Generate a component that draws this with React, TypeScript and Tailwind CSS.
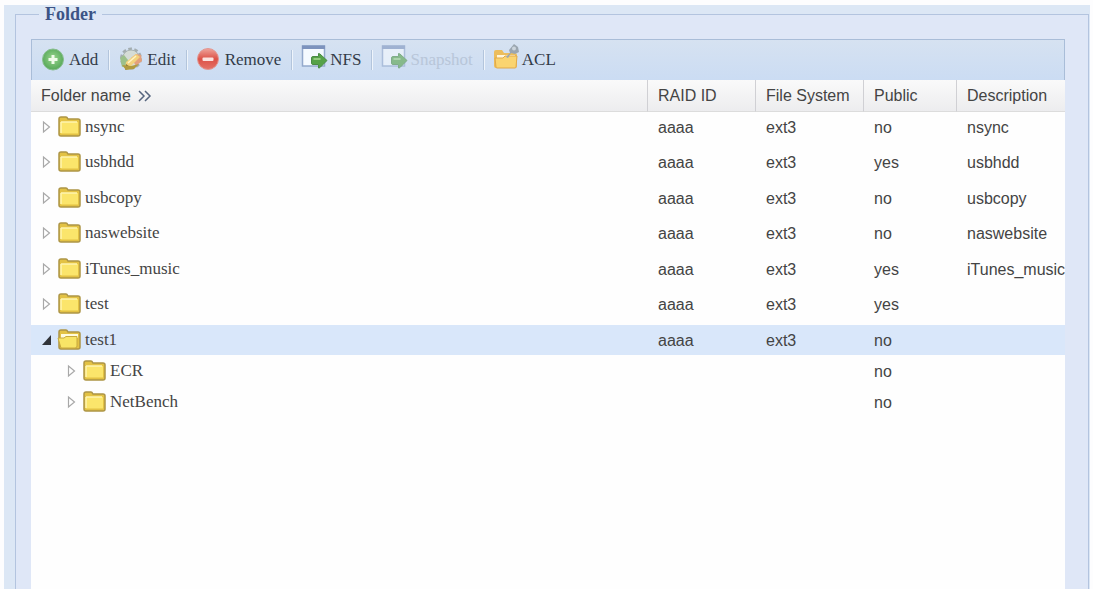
import React, { useState } from 'react';

type Folder = {
  name: string;
  raid?: string;
  fs?: string;
  isPublic: boolean;
  description?: string;
  children?: Folder[];
};

const FOLDERS: Folder[] = [
  { name: 'nsync', raid: 'aaaa', fs: 'ext3', isPublic: false, description: 'nsync' },
  { name: 'usbhdd', raid: 'aaaa', fs: 'ext3', isPublic: true, description: 'usbhdd' },
  { name: 'usbcopy', raid: 'aaaa', fs: 'ext3', isPublic: false, description: 'usbcopy' },
  { name: 'naswebsite', raid: 'aaaa', fs: 'ext3', isPublic: false, description: 'naswebsite' },
  { name: 'iTunes_music', raid: 'aaaa', fs: 'ext3', isPublic: true, description: 'iTunes_music' },
  { name: 'test', raid: 'aaaa', fs: 'ext3', isPublic: true },
  {
    name: 'test1', raid: 'aaaa', fs: 'ext3', isPublic: false,
    children: [
      { name: 'ECR', isPublic: false },
      { name: 'NetBench', isPublic: false },
    ],
  },
];

function AddIcon() {
  return (
    <svg className="w-6 h-6" viewBox="0 0 24 24" aria-hidden="true">
      <defs>
        <radialGradient id="green" cx="0.5" cy="0.45" r="0.6">
          <stop offset="0" stopColor="#9ad68f" />
          <stop offset="1" stopColor="#4fa352" />
        </radialGradient>
      </defs>
      <circle cx="12" cy="11.5" r="10.5" fill="url(#green)" stroke="#86bd8b" strokeWidth="1" />
      <path d="M12 7v9M7.500 11.500h9" stroke="#f0fbe9" strokeWidth="3" />
    </svg>
  );
}

function EditIcon() {
  return (
    <svg className="w-6 h-6 overflow-visible" viewBox="0 0 24 24" aria-hidden="true">
      <circle cx="12" cy="10.5" r="9.5" fill="none" stroke="#a3adb0" strokeWidth="3" strokeDasharray="3.6 2.37" />
      <circle cx="12" cy="10.5" r="8.5" fill="#d5dcd6" stroke="#a9b3b1" strokeWidth="1" />
      <path d="M1 10l4-3 4 5-1 6-5 1z" fill="#9cc08a" />
      <path d="M12 10l5-4 5 1 1 6-6 5z" fill="#e3a07c" />
      <path d="M6 20l1-6L17 6l4 3L11 19z" fill="#f3d27c" />
      <path d="M7 16l4 3-5 3z" fill="#7d6b3a" />
      <path d="M3 17l4 5 8-1 5-5-8 2z" fill="#b09a3e" />
      <path d="M9 15l8-7" stroke="#fff3c6" strokeWidth="1.5" />
    </svg>
  );
}

function RemoveIcon() {
  return (
    <svg className="w-6 h-6" viewBox="0 0 24 24" aria-hidden="true">
      <defs>
        <linearGradient id="red" x1="0" y1="0" x2="0" y2="1">
          <stop offset="0" stopColor="#efa49b" />
          <stop offset="0.5" stopColor="#dc5147" />
          <stop offset="1" stopColor="#e47368" />
        </linearGradient>
      </defs>
      <circle cx="11" cy="11" r="10.5" fill="url(#red)" stroke="#e39791" strokeWidth="1" />
      <rect x="5.500" y="9.500" width="11" height="3.500" rx="1" fill="#fbe3df" />
    </svg>
  );
}

function WindowArrowIcon() {
  return (
    <svg className="w-6 h-6 overflow-visible" viewBox="0 0 24 24" aria-hidden="true">
      <rect x="0.5" y="-2" width="22" height="20" fill="#f5faff" stroke="#93a9cc" strokeWidth="1.5" />
      <rect x="0" y="-2.5" width="23" height="3.500" fill="#7d93bd" />
      <path d="M9.500 10q0-1.500 1.500-1.500h5.500V5.500q1 0 1.500.5l7 6.500-7 7q-.5.500-1.500.5v-3.500H11q-1.500 0-1.500-1.500z" fill="#56a248" stroke="#4b8c45" strokeWidth="1" strokeLinejoin="round" />
      <path d="M11.500 11h7" stroke="#93cc7e" strokeWidth="2" />
    </svg>
  );
}

function AclIcon() {
  return (
    <svg className="w-6 h-6 overflow-visible" viewBox="0 0 24 24" aria-hidden="true">
      <path d="M0 4q0-2 2-2h6l2 3h11q2 0 2 2v11q0 2-2 2H2q-2 0-2-2z" fill="#ecbd5c" />
      <path d="M3 7h18v4H3z" fill="#fff6da" />
      <path d="M1 10h8l2-2h12l-1 11q0 1-1 1H3q-1 0-1-1z" fill="#fad470" stroke="#e0a94a" strokeWidth="1" />
      <path d="M12 9l4-4-1-3 5-6 4 3 1 5-4 2-4-1-3 5z" fill="#9ba6b0" />
      <circle cx="20" cy="0.500" r="2" fill="#ccd5dd" />
    </svg>
  );
}

function FolderIcon({ open }: { open: boolean }) {
  return (
    <svg className="w-6 h-6 shrink-0" viewBox="0 0 24 24" aria-hidden="true">
      <path d="M2 4q0-2 2-2h5q1 0 2 2h10q2 0 2 2v13q0 2-2 2H4q-2 0-2-2z" fill="#e3c244" stroke="#ad9546" strokeWidth="1.500" />
      {open ? (
        <>
          <path d="M4 6h17v4H4z" fill="#fffbdc" />
          <path d="M1 10h6l2-1.500h11v9.500q0 2-2 2H4z" fill="#f8e566" stroke="#c8a93e" strokeWidth="1" strokeLinejoin="round" />
        </>
      ) : (
        <>
          <path d="M4 7h17v11.500H4z" fill="#fbe56b" />
          <path d="M4 7h16M4 7v11" stroke="#fff5b0" strokeWidth="1.500" />
        </>
      )}
    </svg>
  );
}

function Expander({ open }: { open: boolean }) {
  return (
    <svg className="w-3 h-4" viewBox="0 0 12 16" aria-hidden="true">
      {open
        ? <path d="M10 3v10H1z" fill="#30343a" />
        : <path d="M2.500 3v10l6-5z" fill="#fff" stroke="#a8a8a8" strokeWidth="1.200" />}
    </svg>
  );
}

const TOOLS = [
  { label: 'Add', Icon: AddIcon },
  { label: 'Edit', Icon: EditIcon },
  { label: 'Remove', Icon: RemoveIcon },
  { label: 'NFS', Icon: WindowArrowIcon },
  { label: 'Snapshot', Icon: WindowArrowIcon, disabled: true },
  { label: 'ACL', Icon: AclIcon },
];

const TH = 'h-8 pl-2.5 text-left font-normal border-b border-[#dcdcdc] whitespace-nowrap';
const TD = 'pl-[11px] pt-0.5 whitespace-nowrap overflow-hidden';

export default function App() {
  const [selected, setSelected] = useState('test1');
  const [expanded, setExpanded] = useState<string[]>(['test1']);

  const toggle = (name: string) =>
    setExpanded(prev => (prev.includes(name) ? prev.filter(n => n !== name) : [...prev, name]));

  const renderRow = (folder: Folder, child: boolean) => {
    const open = expanded.includes(folder.name) && !!folder.children;
    // open folders sit flush with their children
    const gap = child || open ? '' : 'border-b-[5px] group-even:border-b-[6px] border-[#fefefe]';
    const cell = `${TD} ${gap}`;
    return (
      <tr key={folder.name} onClick={() => setSelected(folder.name)}
        className={`group ${selected === folder.name ? 'bg-[#d9e7fa]' : ''}`}>
        <td className={`${gap} ${child ? 'pl-[35px]' : 'pl-2.5'}`}>
          <div className={`flex items-center font-['Liberation_Serif',serif] text-[17px] ${child ? 'h-[31px]' : 'h-[30px]'}`}>
            <button type="button" aria-label={`Toggle ${folder.name}`} aria-expanded={open} onClick={() => toggle(folder.name)} className="mr-1">
              <Expander open={open} />
            </button>
            <FolderIcon open={open} />
            <span className="pl-1">{folder.name}</span>
          </div>
        </td>
        <td className={cell}>{folder.raid}</td>
        <td className={cell}>{folder.fs}</td>
        <td className={cell}>{folder.isPublic ? 'yes' : 'no'}</td>
        <td className={cell}>{folder.description}</td>
      </tr>
    );
  };

  return (
    <div className="min-h-screen flex bg-[#fdfdfe] pt-[5px] pl-1 pr-[3px]">
      <div className="flex-1 min-w-0 flex bg-[#dce7f5] pl-[11px] pr-px">
        <fieldset className="flex-1 min-w-0 flex flex-col border border-b-0 border-[#b3c4df] bg-[#dfe7f7] pt-4 pl-[15px] pr-[23px]">
          <legend className="ml-2 px-1.5 leading-[18px] font-['Liberation_Serif',serif] text-lg/[18px] font-bold text-[#3c5486]">Folder</legend>

          <div className="flex items-center h-[41px] pl-[9px] border border-b-0 border-[#a9bdd8] bg-linear-to-b from-[#d6e2f1] to-[#cbdcf3] font-['Liberation_Serif',serif] text-[17px] text-[#333b48]">
            {TOOLS.map(({ label, Icon, disabled }, i) => (
              <React.Fragment key={label}>
                {i > 0 && <span className="w-px h-5 ml-2.5 mr-2.5 bg-[#b3c5dc] shadow-[1px_0_0_#eef4fb]" />}
                <button type="button" disabled={disabled} className="flex items-center gap-1 disabled:text-[#a9b6c9] disabled:opacity-60">
                  <Icon />
                  {label}
                </button>
              </React.Fragment>
            ))}
          </div>

          <div className="flex-1 bg-[#fefefe] overflow-hidden">
            <table className="w-full table-fixed border-separate border-spacing-0 font-['Liberation_Sans',sans-serif] text-base text-[#444]">
              <colgroup>
                <col />
                <col className="w-[108px]" />
                <col className="w-[108px]" />
                <col className="w-[93px]" />
                <col className="w-[109px]" />
              </colgroup>
              <thead className="bg-linear-to-b from-[#fafafa] to-[#ececee]">
                <tr>
                  <th className={TH}>
                    <span className="flex items-center gap-1.5">
                      Folder name
                      <svg className="w-4 h-3" viewBox="0 0 16 12" fill="none" stroke="#56657f" strokeWidth="1.500" aria-hidden="true">
                        <path d="M2 1l5 5-5 5M8 1l5 5-5 5" />
                      </svg>
                    </span>
                  </th>
                  {['RAID ID', 'File System', 'Public', 'Description'].map(title => (
                    <th key={title} className={`${TH} border-l border-l-[#d0d0d4]`}>{title}</th>
                  ))}
                </tr>
              </thead>
              <tbody>
                {FOLDERS.map(folder => (
                  <React.Fragment key={folder.name}>
                    {renderRow(folder, false)}
                    {expanded.includes(folder.name) && folder.children?.map(c => renderRow(c, true))}
                  </React.Fragment>
                ))}
              </tbody>
            </table>
          </div>
        </fieldset>
      </div>
    </div>
  );
}
